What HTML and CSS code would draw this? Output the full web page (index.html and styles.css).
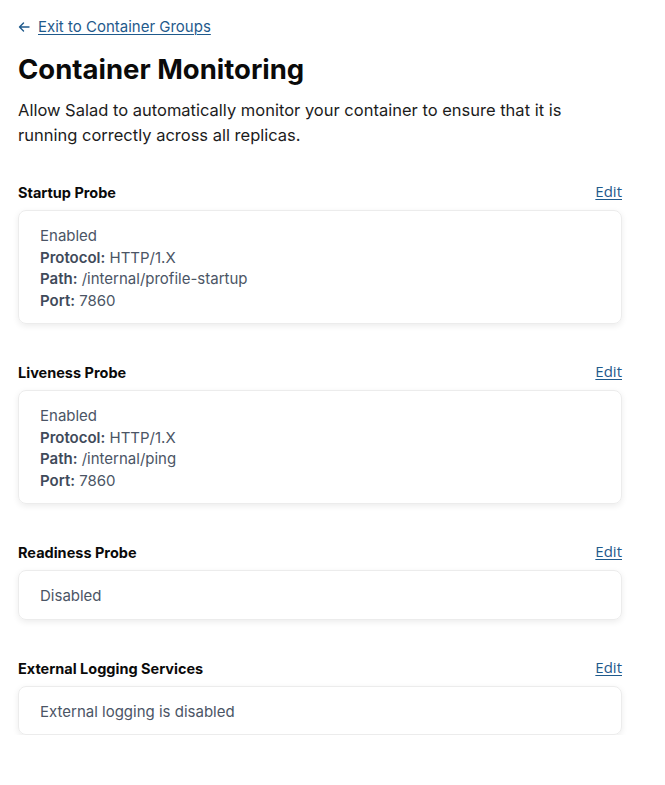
FILE: index.html
```html
<!DOCTYPE html>
<html lang="en">
<head>
<meta charset="utf-8">
<title>Container Monitoring</title>
<link rel="stylesheet" href="styles.css">
</head>
<body>
<main class="page">
  <a class="back-link" href="#">
    <svg class="back-icon" width="12" height="12" viewBox="0 0 12 12" aria-hidden="true"><path d="M11 6H1.5M5.5 2 1.5 6l4 4" fill="none" stroke="currentColor" stroke-width="1.4" stroke-linecap="round" stroke-linejoin="round"/></svg>
    <span class="back-text">Exit to Container Groups</span>
  </a>
  <h1 class="title">Container Monitoring</h1>
  <p class="intro">Allow Salad to automatically monitor your container to ensure that it is running correctly across all replicas.</p>

  <section class="section">
    <div class="section-head">
      <h2 class="section-title">Startup Probe</h2>
      <a class="edit" href="#">Edit</a>
    </div>
    <div class="card">
      <div class="row">Enabled</div>
      <div class="row"><span class="label">Protocol:</span> HTTP/1.X</div>
      <div class="row"><span class="label">Path:</span> /internal/profile-startup</div>
      <div class="row"><span class="label">Port:</span> 7860</div>
    </div>
  </section>

  <section class="section">
    <div class="section-head">
      <h2 class="section-title">Liveness Probe</h2>
      <a class="edit" href="#">Edit</a>
    </div>
    <div class="card">
      <div class="row">Enabled</div>
      <div class="row"><span class="label">Protocol:</span> HTTP/1.X</div>
      <div class="row"><span class="label">Path:</span> /internal/ping</div>
      <div class="row"><span class="label">Port:</span> 7860</div>
    </div>
  </section>

  <section class="section">
    <div class="section-head">
      <h2 class="section-title">Readiness Probe</h2>
      <a class="edit" href="#">Edit</a>
    </div>
    <div class="card">
      <div class="row">Disabled</div>
    </div>
  </section>

  <section class="section">
    <div class="section-head">
      <h2 class="section-title">External Logging Services</h2>
      <a class="edit" href="#">Edit</a>
    </div>
    <div class="card">
      <div class="row">External logging is disabled</div>
    </div>
  </section>
</main>
</body>
</html>
```
FILE: styles.css
```css
* { box-sizing: border-box; }
html, body { margin: 0; padding: 0; background: #ffffff; }
body {
  font-family: Inter, "Noto Sans", sans-serif;
  color: #111;
}
.page {
  width: 604px;
  margin-left: 18px;
  padding-top: 16px;
  display: flex;
  flex-direction: column;
}
.back-link {
  display: flex;
  align-items: center;
  gap: 8px;
  color: #1f5a8c;
  text-decoration: none;
  font-size: 15px;
  line-height: 22px;
}
.back-text { text-decoration: underline; text-underline-offset: 2px; text-decoration-thickness: 1px; }
.back-icon { flex: none; }
.title {
  margin: 14px 0 0;
  font-size: 27.5px;
  line-height: 34px;
  font-weight: 700;
  color: #0a0a0a;
}
.intro {
  margin: 12px 0 0;
  font-size: 16.5px;
  line-height: 25px;
  color: #1c1c1c;
  max-width: 570px;
}
.section { margin-top: 33px; display: flex; flex-direction: column; }
.section + .section { margin-top: 37px; }
.section-head {
  display: flex;
  justify-content: space-between;
  align-items: center;
  height: 20px;
  margin-bottom: 9px;
}
.section-title {
  margin: 4px 0 0;
  font-size: 14.5px;
  line-height: 20px;
  font-weight: 700;
  color: #0a0a0a;
}
.edit {
  font-family: "Open Sans", "Noto Sans", sans-serif;
  font-size: 15px;
  line-height: 20px;
  color: #1f5a8c;
  text-decoration: underline;
  text-underline-offset: 2px;
}
.card {
  border: 1px solid #ececec;
  border-radius: 8px;
  box-shadow: 0 2px 6px rgba(0,0,0,0.08);
  padding: 14px 21px 12px;
  display: flex;
  flex-direction: column;
}
.row {
  font-size: 15px;
  line-height: 21.5px;
  color: #4b5565;
}
.label { font-weight: 600; color: #3f4a5a; }
```
